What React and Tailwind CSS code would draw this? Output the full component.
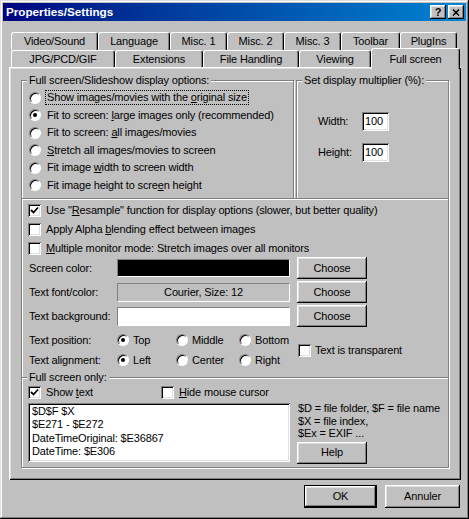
import React from 'react';

const raised = 'shadow-[inset_-1px_-1px_#000,inset_1px_1px_#fff,inset_-2px_-2px_#808080,inset_2px_2px_#dfdfdf]';
const sunken = 'shadow-[inset_1px_1px_#808080,inset_-1px_-1px_#fff,inset_2px_2px_#000,inset_-2px_-2px_#dfdfdf]';

function Radio({ checked }) {
  return (
    <span className="w-[12px] h-[12px] shrink-0 rounded-full bg-white border border-[#808080] border-b-white border-r-white shadow-[inset_1px_1px_#000] flex items-center justify-center">
      {checked && <span className="w-[4px] h-[4px] rounded-full bg-black" />}
    </span>
  );
}

function Check({ checked }) {
  return (
    <span className={`w-[13px] h-[13px] shrink-0 bg-white flex items-center justify-center ${sunken}`}>
      {checked && (
        <svg width="9" height="9" viewBox="0 0 9 9">
          <polyline points="1,4 3.5,6.5 8,1.5" fill="none" stroke="#000" strokeWidth="1.8" />
        </svg>
      )}
    </span>
  );
}

function Btn({ children, className = '' }) {
  return (
    <div className={`flex items-center justify-center bg-[#c0c0c0] ${raised} ${className}`}>
      {children}
    </div>
  );
}

function Group({ label, className = '', children }) {
  return (
    <div className={`relative border border-[#808080] shadow-[inset_1px_1px_#fff,1px_1px_#fff] ${className}`}>
      {label && (
        <span className="absolute left-[5px] top-[-8px] px-[2px] bg-[#c0c0c0] leading-[14px]">{label}</span>
      )}
      {children}
    </div>
  );
}

function Tab({ label, className = '' }) {
  return (
    <div className={`flex items-center justify-center h-full bg-[#c0c0c0] border-t border-l border-white border-r border-r-black rounded-tl-[3px] rounded-tr-[3px] shadow-[inset_-1px_0_#808080] ${className}`}>
      {label}
    </div>
  );
}

export default function App() {
  const radios = [
    <>Show images/movies with the <u>o</u>riginal size</>,
    <>Fit to screen: <u>l</u>arge images only (recommended)</>,
    <>Fit to screen: <u>a</u>ll images/movies</>,
    <><u>S</u>tretch all images/movies to screen</>,
    <>Fit image <u>w</u>idth to screen width</>,
    <>Fit image height to scre<u>e</u>n height</>,
  ];

  return (
    <div className="w-[469px] h-[519px] bg-[#c0c0c0] p-[3px] flex flex-col text-[11px] tracking-[-0.15px] text-black font-['Liberation_Sans',Arial,sans-serif] shadow-[inset_-1px_-1px_#000,inset_1px_1px_#dfdfdf,inset_-2px_-2px_#808080,inset_2px_2px_#fff] overflow-hidden">
      {/* Title bar */}
      <div className="h-[18px] flex items-center justify-between pl-[3px] pr-[2px] bg-gradient-to-r from-[#000080] to-[#1084d0]">
        <span className="text-white font-bold text-[11.7px] tracking-normal">Properties/Settings</span>
        <div className="flex gap-[2px]">
          <Btn className="w-[16px] h-[14px] font-bold text-[11px] leading-none">?</Btn>
          <Btn className="w-[16px] h-[14px]">
            <svg width="8" height="7" viewBox="0 0 8 7">
              <path d="M1 0.5 L7 6.5 M7 0.5 L1 6.5" stroke="#000" strokeWidth="1.6" />
            </svg>
          </Btn>
        </div>
      </div>

      <div className="pl-[6px] mt-[11px]">
        {/* Tabs */}
        <div className="flex h-[18px] ml-[2px]">
          <Tab label="Video/Sound" className="w-[87px]" />
          <Tab label="Language" className="w-[72px]" />
          <Tab label="Misc. 1" className="w-[57px]" />
          <Tab label="Misc. 2" className="w-[57px]" />
          <Tab label="Misc. 3" className="w-[57px]" />
          <Tab label="Toolbar" className="w-[59px]" />
          <Tab label="PlugIns" className="w-[57px]" />
        </div>
        <div className="flex items-end h-[17px] ml-[2px]">
          <Tab label="JPG/PCD/GIF" className="w-[104px]" />
          <Tab label="Extensions" className="w-[88px]" />
          <Tab label="File Handling" className="w-[96px]" />
          <Tab label="Viewing" className="w-[72px]" />
          <div className="relative z-10 w-[89px] h-[21px] -mb-[2px] flex justify-center pt-[2px] bg-[#c0c0c0] border-t border-l border-white border-r border-r-black rounded-tl-[3px] rounded-tr-[3px] shadow-[inset_-1px_0_#808080]">
            Full screen
          </div>
        </div>

        {/* Panel */}
        <div className="w-[452px] h-[413px] pl-[12px] pt-[13px] shadow-[inset_1px_1px_#fff,inset_-1px_-1px_#000,inset_2px_2px_#dfdfdf,inset_-2px_-2px_#808080]">
          <div className="flex">
            <Group label="Full screen/Slideshow display options:" className="w-[273px] h-[119px] pt-[8px]">
              {radios.map((r, i) => (
                <div key={i} className="h-[17.5px] flex items-center pl-[7px]">
                  <Radio checked={i === 1} />
                  <span className={`ml-[4px] px-[1px] leading-[13px] border ${i === 0 ? 'border-dotted border-black' : 'border-transparent'}`}>{r}</span>
                </div>
              ))}
            </Group>
            <Group label="Set display multiplier (%):" className="w-[153px] h-[119px] ml-[2px] pt-[31px] pl-[21px]">
              <div className="flex items-center h-[19px]">
                <span className="w-[44px]">Width:</span>
                <span className={`w-[27px] h-[19px] bg-white pl-[3px] flex items-center ${sunken}`}>100</span>
              </div>
              <div className="flex items-center h-[19px] mt-[12px]">
                <span className="w-[44px]">Height:</span>
                <span className={`w-[27px] h-[19px] bg-white pl-[3px] flex items-center ${sunken}`}>100</span>
              </div>
            </Group>
          </div>

          <Group className="w-[428px] h-[180px] -mt-[1px] pt-[2px]">
            <div className="h-[19px] flex items-center pl-[6px]">
              <Check checked />
              <span className="ml-[5px]">Use "<u>R</u>esample" function for display options (slower, but better quality)</span>
            </div>
            <div className="h-[19px] flex items-center pl-[6px]">
              <Check />
              <span className="ml-[5px]">Apply Alpha <u>b</u>lending effect between images</span>
            </div>
            <div className="h-[19px] flex items-center pl-[6px]">
              <Check />
              <span className="ml-[5px]"><u>M</u>ultiple monitor mode: Stretch images over all monitors</span>
            </div>

            <div className="-mt-[2px] pl-[7px]">
              <div className="h-[24px] flex items-center">
                <span className="w-[88px]">Screen color:</span>
                <span className="w-[173px] h-[18px] bg-black border border-[#808080] border-b-white border-r-white" />
                <Btn className="w-[70px] h-[22px] ml-[7px]">Choose</Btn>
              </div>
              <div className="h-[24px] flex items-center">
                <span className="w-[88px]">Text font/color:</span>
                <span className="w-[173px] h-[19px] flex items-center justify-center border border-[#808080] border-b-white border-r-white">Courier, Size: 12</span>
                <Btn className="w-[70px] h-[22px] ml-[7px]">Choose</Btn>
              </div>
              <div className="h-[24px] flex items-center">
                <span className="w-[88px]">Text background:</span>
                <span className="w-[173px] h-[19px] bg-white border border-[#808080] border-b-white border-r-white" />
                <Btn className="w-[70px] h-[22px] ml-[7px]">Choose</Btn>
              </div>
            </div>

            <div className="flex mt-[2px] pl-[7px]">
              <div className="w-[269px]">
                <div className="h-[20px] flex items-center">
                  <span className="w-[88px]">Text position:</span>
                  <span className="w-[59px] flex items-center"><Radio checked /><span className="ml-[4px]">Top</span></span>
                  <span className="w-[63px] flex items-center"><Radio /><span className="ml-[4px]">Middle</span></span>
                  <span className="flex items-center"><Radio /><span className="ml-[4px]">Bottom</span></span>
                </div>
                <div className="h-[20px] flex items-center">
                  <span className="w-[88px]">Text alignment:</span>
                  <span className="w-[59px] flex items-center"><Radio checked /><span className="ml-[4px]">Left</span></span>
                  <span className="w-[63px] flex items-center"><Radio /><span className="ml-[4px]">Center</span></span>
                  <span className="flex items-center"><Radio /><span className="ml-[4px]">Right</span></span>
                </div>
              </div>
              <div className="flex items-center">
                <Check />
                <span className="ml-[4px]">Text is transparent</span>
              </div>
            </div>
          </Group>

          <Group label="Full screen only:" className="w-[428px] h-[91px] -mt-[1px] pt-[6px] pl-[6px]">
            <div className="h-[16px] flex items-center">
              <span className="w-[133px] flex items-center"><Check checked /><span className="ml-[5px]">Show <u>t</u>ext</span></span>
              <span className="flex items-center"><Check /><span className="ml-[5px]"><u>H</u>ide mouse cursor</span></span>
            </div>
            <div className="flex mt-[3px]">
              <div className={`w-[262px] h-[59px] bg-white pl-[4px] pt-[2px] leading-[13.4px] ${sunken}`}>
                <div>$D$F $X</div>
                <div>$E271 - $E272</div>
                <div>DateTimeOriginal: $E36867</div>
                <div>DateTime: $E306</div>
              </div>
              <div className="ml-[8px] -mt-[1px] leading-[12.5px]">
                <div>$D = file folder, $F = file name</div>
                <div>$X = file index,</div>
                <div>$Ex = EXIF ...</div>
                <Btn className="w-[70px] h-[22px] mt-[2px] -ml-[1px]">Help</Btn>
              </div>
            </div>
          </Group>
        </div>

        {/* Dialog buttons */}
        <div className="w-[452px] flex justify-end gap-[8px] pr-[1px] mt-[5px]">
          <div className="w-[73px] h-[23px] border border-black">
            <Btn className="w-full h-full">OK</Btn>
          </div>
          <Btn className="w-[75px] h-[23px]">Annuler</Btn>
        </div>
      </div>
    </div>
  );
}
